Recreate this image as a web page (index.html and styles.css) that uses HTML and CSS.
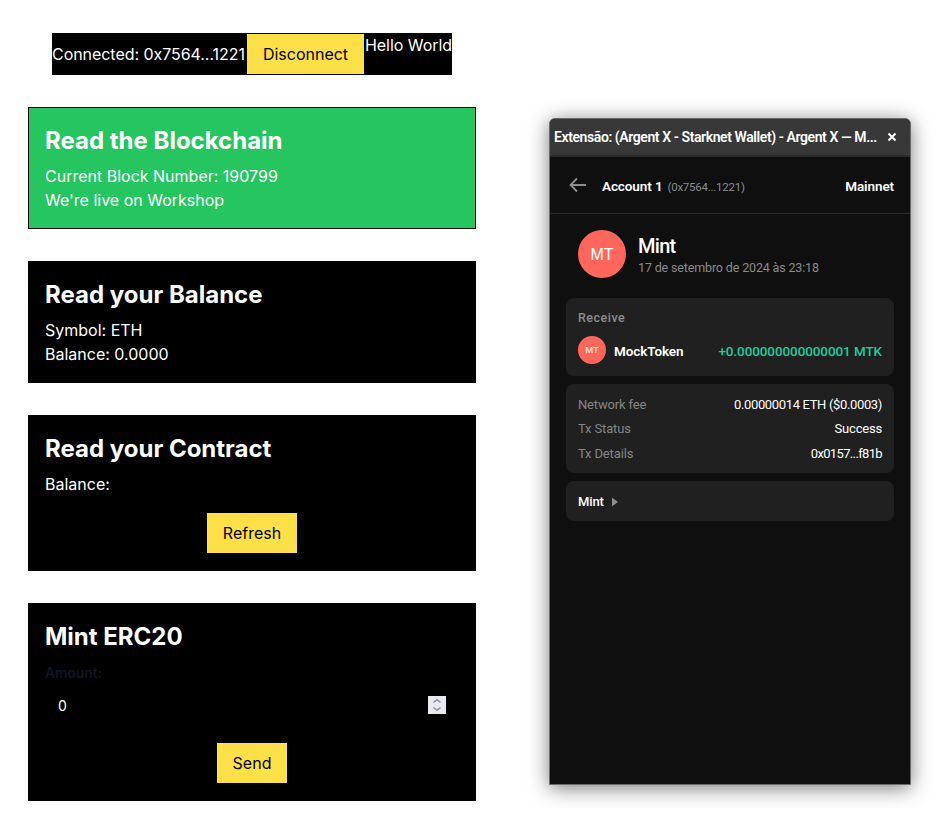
FILE: index.html
```html
<!DOCTYPE html>
<html lang="en">
<head>
<meta charset="utf-8">
<title>Starknet Workshop</title>
<link rel="stylesheet" href="styles.css">
</head>
<body>
<main class="page">
  <section class="dapp">
    <header class="wallet-bar">
      <div class="connection">
        <span class="connected">Connected: 0x7564...1221</span>
        <button class="button">Disconnect</button>
      </div>
      <p class="hello">Hello World</p>
    </header>
    <article class="card card-green">
      <h3>Read the Blockchain</h3>
      <p>Current Block Number: 190799</p>
      <p>We're live on Workshop</p>
    </article>
    <article class="card">
      <h3>Read your Balance</h3>
      <p>Symbol: ETH</p>
      <p>Balance: 0.0000</p>
    </article>
    <article class="card">
      <h3>Read your Contract</h3>
      <p>Balance:</p>
      <button class="button action">Refresh</button>
    </article>
    <article class="card">
      <h3>Mint ERC20</h3>
      <div class="label">Amount:</div>
      <div class="amount">
        <span>0</span>
        <svg class="spinner" viewBox="0 0 18 18"><path d="M5.500 6.500 9 3.700l3.500 2.800M5.500 11.500 9 14.300l3.500-2.800"/></svg>
      </div>
      <button class="button action">Send</button>
    </article>
  </section>

  <section class="window">
    <div class="titlebar">
      <span class="window-title">Extensão: (Argent X - Starknet Wallet) - Argent X — M...</span>
      <svg class="close" viewBox="0 0 10 10"><path d="m1.500 1.500 7 7m0-7-7 7"/></svg>
    </div>
    <div class="nav">
      <svg class="back" viewBox="0 0 18 16"><path d="M17 8H2M8 1.500 1.500 8 8 14.500"/></svg>
      <span class="account">Account 1</span>
      <span class="address">(0x7564...1221)</span>
      <span class="network">Mainnet</span>
    </div>
    <div class="content">
      <div class="summary">
        <div class="avatar avatar-large">MT</div>
        <div>
          <h2>Mint</h2>
          <p class="date">17 de setembro de 2024 às 23:18</p>
        </div>
      </div>
      <div class="panel receive">
        <div class="receive-label">Receive</div>
        <div class="token">
          <div class="avatar">MT</div>
          <span class="token-name">MockToken</span>
          <span class="token-amount">+0.000000000000001 MTK</span>
        </div>
      </div>
      <div class="panel details">
        <div class="row"><span class="key">Network fee</span><span class="fee">0.00000014 ETH ($0.0003)</span></div>
        <div class="row"><span class="key">Tx Status</span><span class="status">Success</span></div>
        <div class="row"><span class="key">Tx Details</span><span class="hash">0x0157...f81b</span></div>
      </div>
      <div class="panel call">
        <span class="call-name">Mint</span>
        <svg class="arrow" viewBox="0 0 6 10"><path d="M0 .5v9L6 5z"/></svg>
      </div>
    </div>
  </section>
</main>
</body>
</html>
```
FILE: styles.css
```css
* { box-sizing: border-box; }
body { margin: 0; background: #fff; font: 16px/24px Inter, sans-serif; }
h2, h3, p { margin: 0; }
.page { display: flex; align-items: flex-start; gap: 73px; height: 828px; padding: 33px 39px 0 28px; overflow: hidden; }

.dapp { display: flex; flex-direction: column; gap: 32px; width: 448px; }
.wallet-bar { display: flex; width: 400px; height: 42px; margin: 0 auto; background: #000; color: #fff; white-space: nowrap; }
.connection { display: flex; align-items: center; width: 313px; }
.connected { width: 194px; letter-spacing: -.05px; }
.button { height: 42px; padding: 8px 16px; border: 1px solid #000; background: #fde047; color: #000; font: inherit; }
.connection .button { width: 119px; flex: none; padding: 8px 15px; }
.hello { flex: 1; letter-spacing: -.05px; }
.card { display: flex; flex-direction: column; padding: 16px; border: 1px solid #000; background: #000; color: #fff; }
.card-green { background: #25c55f; }
.card h3 { margin-bottom: 7px; padding-top: 1px; font-size: 24px; line-height: 32px; font-weight: 700; }
.action { align-self: center; margin-top: 16px; }
.label { height: 26px; line-height: 26px; font-size: 14px; font-weight: 500; color: #111827; }
.amount { display: flex; align-items: center; justify-content: space-between; height: 40px; padding: 0 13px; font-size: 14px; }
.spinner { width: 18px; height: 18px; margin-top: -2px; background: #e9e9f0; fill: none; stroke: #8f8f9d; stroke-width: 1.500; }

.window { width: 362px; height: 667px; margin-top: 85px; border: 1px solid #6b6b6b; border-radius: 6px 6px 0 0; overflow: hidden; background: #0f0f0f; box-shadow: 0 3px 20px rgba(0,0,0,.52); color: #fff; font-family: Roboto, sans-serif; white-space: nowrap; }
.titlebar { display: flex; align-items: center; justify-content: space-between; height: 38px; padding: 0 13px 0 4px; border-bottom: 2px solid #292929; background: #383838; }
.window-title { font-size: 14px; font-weight: 600; letter-spacing: -.41px; }
.close { width: 10px; height: 10px; fill: none; stroke: #fff; stroke-width: 2; }
.nav { display: flex; align-items: center; height: 57px; padding: 1px 16px 0 19px; border-bottom: 1px solid #292929; }
.back { width: 18px; height: 16px; margin: -1px 15px 0 0; fill: none; stroke: #8c8c8c; stroke-width: 1.8; }
.account { padding-top: 1px; font-size: 13.500px; font-weight: 600; letter-spacing: -.1px; }
.address { margin-left: 5px; padding-top: 2px; font-size: 11.500px; letter-spacing: -.25px; color: #8c8c8c; }
.network { margin-left: auto; padding-top: 1px; font-size: 13.500px; font-weight: 600; letter-spacing: -.1px; }
.content { display: flex; flex-direction: column; gap: 8px; padding: 16px; }
.summary { display: flex; gap: 12px; height: 60px; padding-left: 12px; }
.avatar { display: flex; flex: none; align-items: center; justify-content: center; width: 28px; height: 28px; border-radius: 50%; background: #ff675c; font: 9.500px/12px "Liberation Sans", sans-serif; }
.avatar-large { width: 48px; height: 48px; padding-top: 1px; font-size: 16px; }
.summary h2 { margin-top: 4px; font-size: 20px; line-height: 24px; font-weight: 500; letter-spacing: -.7px; }
.date { font-size: 12.500px; line-height: 20px; letter-spacing: -.15px; color: #8c8c8c; }
.panel { border-radius: 8px; background: #202020; padding: 0 12px; }
.receive { height: 78px; padding-top: 10px; }
.receive-label { font-size: 12.500px; line-height: 20px; font-weight: 500; letter-spacing: .5px; color: #8c8c8c; }
.token { display: flex; align-items: center; margin-top: 8px; }
.token-name { margin-left: 8px; padding-top: 2px; font-size: 13.500px; font-weight: 600; letter-spacing: -.1px; }
.token-amount { margin-left: auto; padding-top: 2px; font-size: 13.500px; font-weight: 500; letter-spacing: -.1px; color: #1dcf9f; }
.details { display: flex; flex-direction: column; height: 89px; padding-top: 9px; font-size: 13px; }
.row { display: flex; justify-content: space-between; line-height: 24.400px; }
.key { color: #858585; letter-spacing: -.15px; }
.fee { letter-spacing: -.35px; }
.status { letter-spacing: -.2px; }
.hash { letter-spacing: -.65px; }
.call { display: flex; align-items: center; gap: 8px; height: 40px; font-size: 13px; font-weight: 500; }
.call-name { padding-top: 2px; letter-spacing: -.1px; }
.arrow { width: 6px; height: 10px; margin-top: 1px; fill: #8c8c8c; }
```
